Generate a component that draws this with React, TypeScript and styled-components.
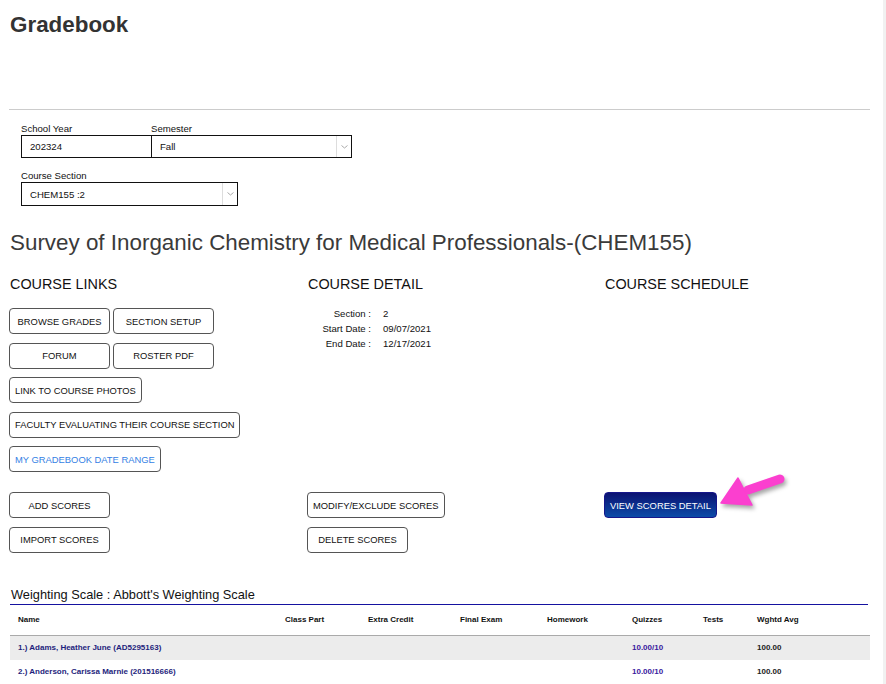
import React from 'react'
import styled, { createGlobalStyle } from 'styled-components'

const GlobalStyle = createGlobalStyle`
  body {
    margin: 0;
    background: #fff;
    font-family: 'Liberation Sans', Arial, sans-serif;
    color: #111;
  }
`

const Page = styled.div`
  display: flex;
  width: 886px;
  min-height: 684px;
`

const Main = styled.div`
  width: 861px;
  padding-left: 9px;
`

const ScrollTrack = styled.div`
  margin-left: auto;
  width: 3px;
  background: #f1f1f1;
`

const PageTitle = styled.h1`
  margin: 0;
  padding: 12px 0 0 1px;
  font-size: 22.4px;
  line-height: 26px;
  font-weight: 700;
  color: #333;
`

const Divider = styled.hr`
  margin: 71px 0 0;
  height: 0;
  border: 0;
  border-top: 1px solid #ccc;
`

const Filters = styled.div`
  display: flex;
  flex-direction: column;
  gap: 12px;
  padding: 13px 0 0 12px;
`

const FieldRow = styled.div`
  display: flex;
`

const Field = styled.div`
  display: flex;
  flex-direction: column;
  gap: 1px;

  & + & {
    margin-left: -1px;
  }
`

const FieldLabel = styled.span`
  font-size: 9.6px;
  line-height: 11px;
  color: #111;
`

const Box = styled.div<{ $width: number; $height: number }>`
  display: flex;
  align-items: center;
  box-sizing: border-box;
  width: ${({ $width }) => $width}px;
  height: ${({ $height }) => $height}px;
  border: 1px solid #111;
  background: #fff;
  font-size: 9.6px;
  color: #111;
`

const BoxValue = styled.span`
  flex: 1;
  padding-left: 8px;
`

const ArrowCell = styled.span`
  display: flex;
  align-items: center;
  justify-content: center;
  width: 14px;
  height: 100%;
  border-left: 1px solid #ddd;
`

const Chevron = () => (
  <svg width="7" height="4" viewBox="0 0 7 4">
    <polyline points="0.5,0.5 3.5,3 6.5,0.5" fill="none" stroke="#aaa" strokeWidth="1" />
  </svg>
)

function SelectBox({ value, width, height }: { value: string; width: number; height: number }) {
  return (
    <Box $width={width} $height={height}>
      <BoxValue>{value}</BoxValue>
      <ArrowCell>
        <Chevron />
      </ArrowCell>
    </Box>
  )
}

const CourseTitle = styled.h2`
  margin: 24px 0 0;
  padding-left: 1px;
  font-size: 22.4px;
  line-height: 26px;
  font-weight: 400;
  color: #3a3a3a;
`

const Columns = styled.div`
  display: grid;
  grid-template-columns: 298px 297px 1fr;
  margin-top: 20px;
`

const ColumnHeading = styled.h3`
  margin: 0;
  padding-left: 1px;
  font-size: 14.4px;
  line-height: 16px;
  font-weight: 400;
  color: #111;
`

const ButtonStack = styled.div<{ $top: number }>`
  display: flex;
  flex-direction: column;
  align-items: flex-start;
  gap: 8.5px;
  margin-top: ${({ $top }) => $top}px;
`

const ButtonRow = styled.div`
  display: flex;
  gap: 3px;
`

const Button = styled.button<{ $link?: boolean }>`
  box-sizing: border-box;
  height: 26px;
  min-width: 101px;
  padding: 0 5px;
  border: 1px solid #555;
  border-radius: 4px;
  background: #fff;
  font-family: inherit;
  font-size: 9.4px;
  white-space: nowrap;
  color: ${({ $link }) => ($link ? '#3481e4' : '#111')};
  cursor: pointer;
`

const PrimaryButton = styled(Button)`
  border-color: #16168a;
  background: linear-gradient(#0b1272, #0b4ba8);
  color: #fff;
`

const DetailGrid = styled.div`
  display: grid;
  grid-template-columns: 64px auto;
  column-gap: 12px;
  margin-top: 14px;
  font-size: 9.6px;
  line-height: 15px;
  color: #111;
`

const DetailLabel = styled.span`
  text-align: right;
`

const Actions = styled.div`
  display: grid;
  grid-template-columns: 298px 297px 1fr;
  margin-top: 20px;
`

const ScheduleCell = styled.div`
  position: relative;
`

const Pointer = styled.svg`
  position: absolute;
  left: 110px;
  top: -20px;
  filter: drop-shadow(2px 3px 2px rgba(0, 0, 0, 0.35));
`

const WeightingTitle = styled.h4`
  width: 857px;
  margin: 34px 0 0 1px;
  padding: 0 0 2px 1px;
  border-bottom: 1px solid #1512a0;
  font-size: 12.8px;
  line-height: 15px;
  font-weight: 400;
  color: #111;
`

const GRID = '267px 83px 92px 87px 85px 71px 54px 121px'

const HeadRow = styled.div`
  display: grid;
  grid-template-columns: ${GRID};
  align-items: center;
  width: 860px;
  height: 30px;
  margin-left: 1px;
  border-bottom: 1px solid #aaa;
  font-size: 8px;
  font-weight: 700;
  color: #111;
`

const BodyRow = styled.div<{ $shaded: boolean }>`
  display: grid;
  grid-template-columns: ${GRID};
  align-items: center;
  width: 860px;
  height: 24px;
  margin-left: 1px;
  background: ${({ $shaded }) => ($shaded ? '#ececec' : 'transparent')};
  font-size: 8px;
  font-weight: 700;
`

const Cell = styled.div<{ $color?: string }>`
  padding-left: 8px;
  white-space: nowrap;
  color: ${({ $color }) => $color ?? '#111'};
`

const headers = ['Name', 'Class Part', 'Extra Credit', 'Final Exam', 'Homework', 'Quizzes', 'Tests', 'Wghtd Avg']

const students = [
  { name: '1.) Adams, Heather June (AD5295163)', quizzes: '10.00/10', avg: '100.00' },
  { name: '2.) Anderson, Carissa Marnie (201516666)', quizzes: '10.00/10', avg: '100.00' }
]

export default function App() {
  return (
    <Page>
      <GlobalStyle />
      <Main>
        <PageTitle>Gradebook</PageTitle>
        <Divider />

        <Filters>
          <FieldRow>
            <Field>
              <FieldLabel>School Year</FieldLabel>
              <Box $width={131} $height={23}>
                <BoxValue>202324</BoxValue>
              </Box>
            </Field>
            <Field>
              <FieldLabel>Semester</FieldLabel>
              <SelectBox value="Fall" width={201} height={23} />
            </Field>
          </FieldRow>
          <Field>
            <FieldLabel>Course Section</FieldLabel>
            <SelectBox value="CHEM155 :2" width={217} height={24} />
          </Field>
        </Filters>

        <CourseTitle>Survey of Inorganic Chemistry for Medical Professionals-(CHEM155)</CourseTitle>

        <Columns>
          <div>
            <ColumnHeading>COURSE LINKS</ColumnHeading>
            <ButtonStack $top={16}>
              <ButtonRow>
                <Button>BROWSE GRADES</Button>
                <Button>SECTION SETUP</Button>
              </ButtonRow>
              <ButtonRow>
                <Button>FORUM</Button>
                <Button>ROSTER PDF</Button>
              </ButtonRow>
              <Button>LINK TO COURSE PHOTOS</Button>
              <Button>FACULTY EVALUATING THEIR COURSE SECTION</Button>
              <Button $link>MY GRADEBOOK DATE RANGE</Button>
            </ButtonStack>
          </div>
          <div>
            <ColumnHeading>COURSE DETAIL</ColumnHeading>
            <DetailGrid>
              <DetailLabel>Section :</DetailLabel>
              <span>2</span>
              <DetailLabel>Start Date :</DetailLabel>
              <span>09/07/2021</span>
              <DetailLabel>End Date :</DetailLabel>
              <span>12/17/2021</span>
            </DetailGrid>
          </div>
          <div>
            <ColumnHeading>COURSE SCHEDULE</ColumnHeading>
          </div>
        </Columns>

        <Actions>
          <ButtonStack $top={0}>
            <Button>ADD SCORES</Button>
            <Button>IMPORT SCORES</Button>
          </ButtonStack>
          <ButtonStack $top={0}>
            <Button>MODIFY/EXCLUDE SCORES</Button>
            <Button>DELETE SCORES</Button>
          </ButtonStack>
          <ScheduleCell>
            <PrimaryButton>VIEW SCORES DETAIL</PrimaryButton>
            <Pointer width="80" height="45" viewBox="0 0 80 45">
              <line x1="34" y1="18" x2="66" y2="7" stroke="#fb3fcf" strokeWidth="9" strokeLinecap="round" />
              <polygon points="7,31 24,6 38,33" fill="#fb3fcf" stroke="#fb3fcf" strokeWidth="1.5" strokeLinejoin="round" />
            </Pointer>
          </ScheduleCell>
        </Actions>

        <WeightingTitle>Weighting Scale : Abbott's Weighting Scale</WeightingTitle>
        <HeadRow>
          {headers.map(h => (
            <Cell key={h}>{h}</Cell>
          ))}
        </HeadRow>
        {students.map((s, i) => (
          <BodyRow key={s.name} $shaded={i % 2 === 0}>
            <Cell $color="#1e1e7c">{s.name}</Cell>
            <Cell />
            <Cell />
            <Cell />
            <Cell />
            <Cell $color="#3a1a9e">{s.quizzes}</Cell>
            <Cell />
            <Cell $color="#222">{s.avg}</Cell>
          </BodyRow>
        ))}
      </Main>
      <ScrollTrack />
    </Page>
  )
}
